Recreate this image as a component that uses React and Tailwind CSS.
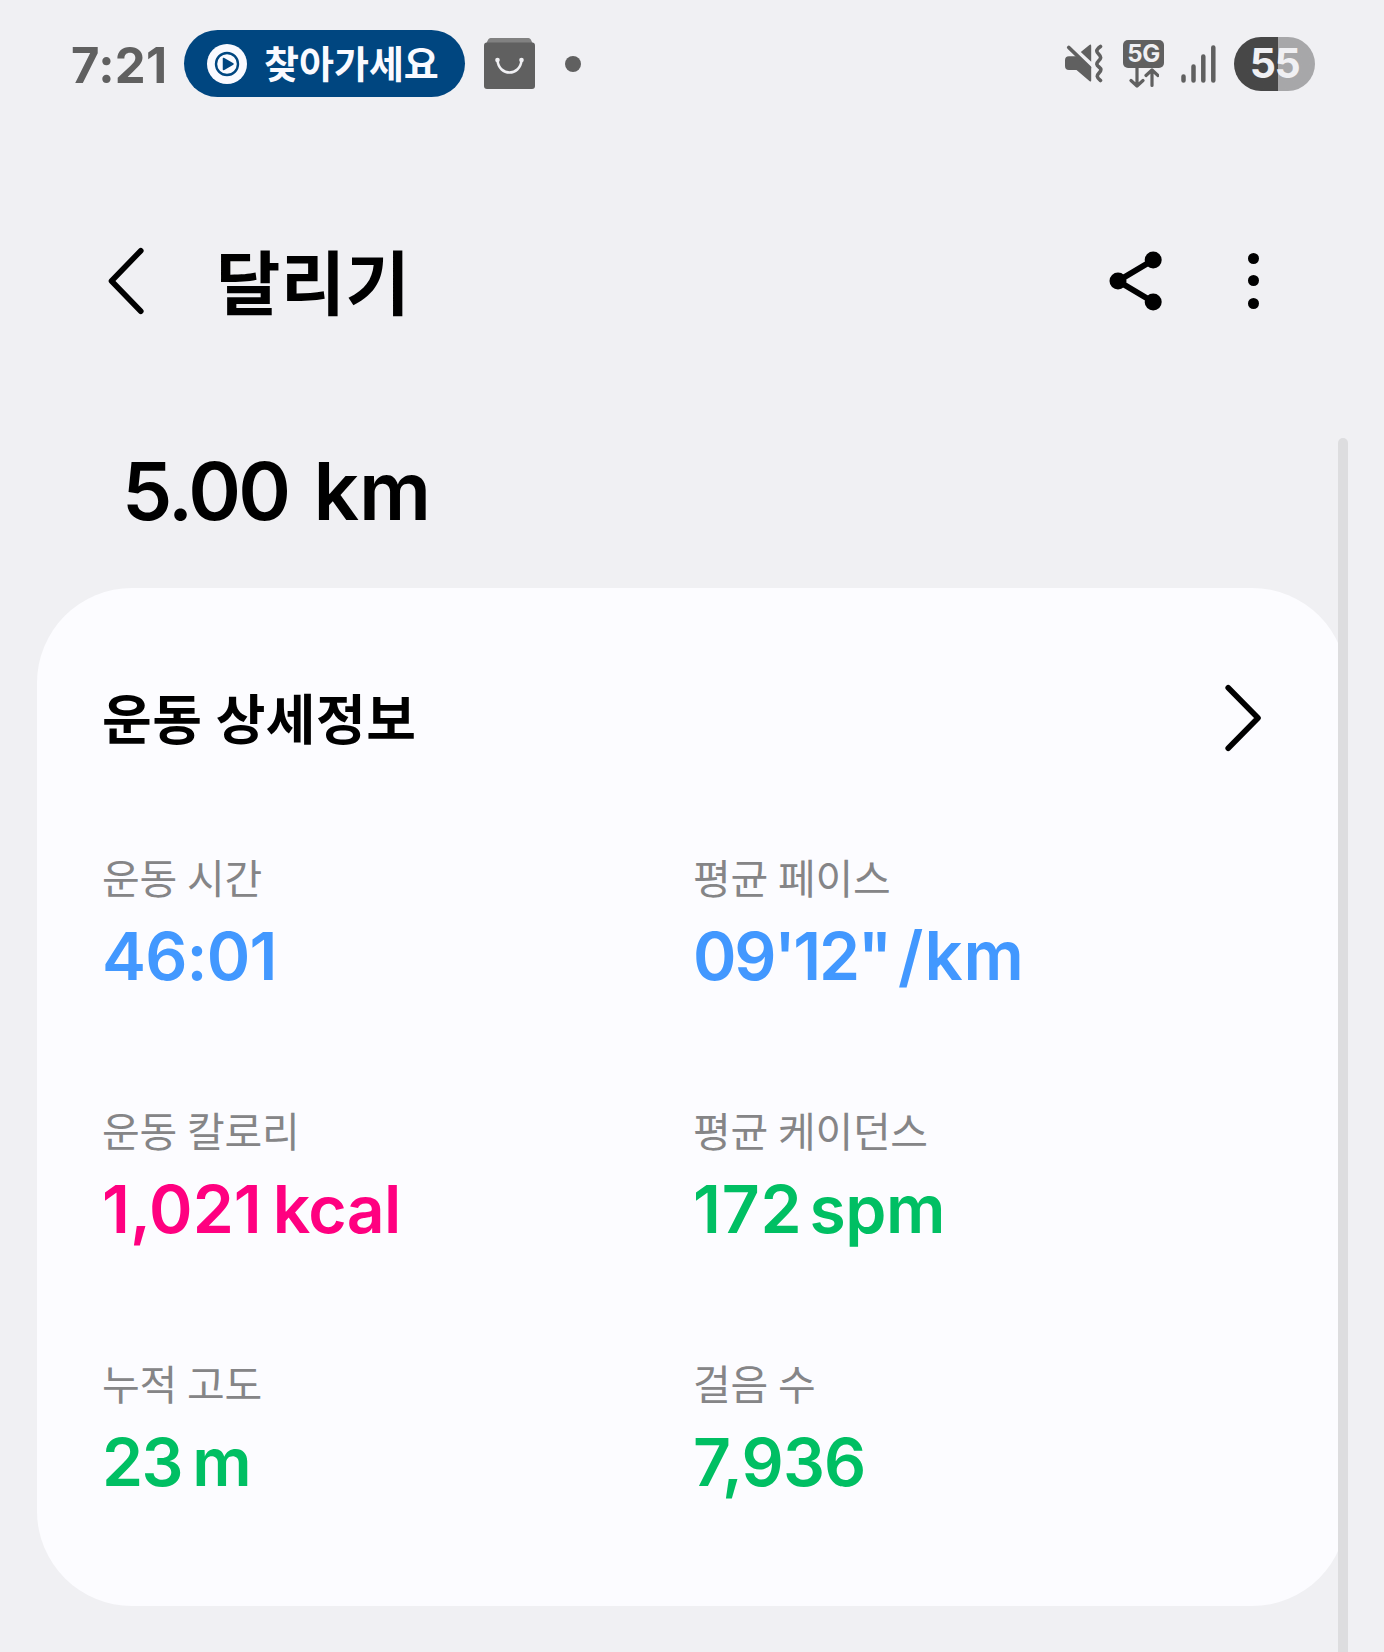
import React from "react";

const stats = [
  { label: "운동 시간", value: "46:01", unit: "", color: "text-[#4298ff]", tracking: "tracking-[-0.8px]", unitClass: "" },
  { label: "평균 페이스", value: "09'12\"", unit: "/km", color: "text-[#4298ff]", tracking: "tracking-[-2.3px]", unitClass: "ml-[8px] text-[67px] tracking-[1px]" },
  { label: "운동 칼로리", value: "1,021", unit: "kcal", color: "text-[#ff0080]", tracking: "tracking-[0px]", unitClass: "ml-[11px] tracking-[-0.6px]" },
  { label: "평균 케이던스", value: "172", unit: "spm", color: "text-[#00bf63]", tracking: "tracking-[0.8px]", unitClass: "ml-[7px] tracking-[-0.5px]" },
  { label: "누적 고도", value: "23", unit: "m", color: "text-[#00bf63]", tracking: "tracking-[-1.5px]", unitClass: "ml-[10px]" },
  { label: "걸음 수", value: "7,936", unit: "", color: "text-[#00bf63]", tracking: "tracking-[-0.8px]", unitClass: "" },
];

const PlayBadge = () => (
  <svg width="40" height="40" viewBox="0 0 40 40">
    <circle cx="20" cy="20" r="20" fill="#fafaff" />
    <circle cx="20" cy="20" r="11" fill="none" stroke="#004680" strokeWidth="2.4" />
    <path d="M16.5 14.5v11l9.5-5.5z" fill="#004680" stroke="#004680" strokeWidth="1.5" strokeLinejoin="round" />
  </svg>
);

const BagIcon = () => (
  <svg width="51" height="51" viewBox="0 0 51 51">
    <path d="M6.5 0h38q1.6 0 2.3 1.5L49 6H2l2.2-4.5Q4.9 0 6.5 0z" fill="#818181" />
    <rect x="0" y="4.5" width="51" height="46.5" rx="3" fill="#606060" />
    <path d="M13.5 22.5C15 38.5 36 38.5 37.5 22.5" fill="none" stroke="#f0f0f3" strokeWidth="2.6" />
    <circle cx="13.5" cy="22" r="2.3" fill="#f0f0f3" />
    <circle cx="37.5" cy="22" r="2.3" fill="#f0f0f3" />
  </svg>
);

const MuteIcon = () => (
  <svg width="39" height="39" viewBox="0 0 39 39" fill="#606060">
    <path d="M26.2 2v15.8L15.8 8 24.4.9q1.8-1 1.8 1.1z" />
    <path d="M4 12.3h8.5L26.2 24v12.5q0 1.6-1.5.8L11.500 26H4q-4 0-4-4v-5.700q0-4 4-4z" />
    <path d="M3.8 3.5 24.5 23.500" stroke="#606060" strokeWidth="3.8" strokeLinecap="round" />
    <path
      d="M35.5 2.500C30 6.500 31.500 8 34 10.500s2 4-.5 6.500-2 4 .5 6 2.500 3.500 0 6-2.500 4.500 1.500 7.500"
      fill="none"
      stroke="#606060"
      strokeWidth="3.6"
      strokeLinecap="round"
    />
  </svg>
);

const DataArrows = () => (
  <svg width="30" height="20" viewBox="0 0 30 20" fill="none" stroke="#606060" strokeWidth="3.2" strokeLinecap="round" strokeLinejoin="round">
    <path d="M8 0v17.5M2 12.5l6 5.5 6-5.5" />
    <path d="M23 17.5V2M17 7.5 23 2l6 5.5" />
  </svg>
);

const SignalIcon = () => (
  <svg width="35" height="38" viewBox="0 0 35 38" stroke="#606060" strokeWidth="4.5" strokeLinecap="round">
    <path d="M2.5 31.5v4M12.5 21.5v14M22.3 11.5v24M32.3 2.5v33" />
  </svg>
);

const StatusBar = () => (
  <div className="flex items-center h-[127px] pl-[71px] pr-[69px]">
    <span className="w-[113px] pt-[3px] text-[49px] leading-none font-bold tracking-[0.3px] text-[#606060]">7:21</span>
    <div className="flex items-center w-[281px] h-[67px] rounded-full bg-[#004680] pl-[23px]">
      <PlayBadge />
      <span className="ml-[17px] text-[38px] leading-none font-bold text-[#fafaff] whitespace-nowrap">찾아가세요</span>
    </div>
    <div className="ml-[19px]">
      <BagIcon />
    </div>
    <div className="ml-[30px] size-4 rounded-full bg-[#606060]" />

    <div className="ml-auto flex items-center">
      <MuteIcon />
      <div className="ml-[19px] flex flex-col items-center w-[41px]">
        <div className="flex items-center justify-center w-[41px] h-[28px] rounded-[5px] bg-[#606060] text-[24px] leading-none font-bold tracking-[-0.5px] text-[#f0f0f3]">
          5G
        </div>
        <DataArrows />
      </div>
      <div className="ml-[17px]">
        <SignalIcon />
      </div>
      <div className="ml-[18px] flex items-center justify-center w-[81px] h-[54px] rounded-full bg-linear-to-r from-[#474747] from-54% to-[#a7a7a9] to-54% text-[41px] leading-none font-bold tracking-[-1.5px] text-[#f0f0f3]">
        55
      </div>
    </div>
  </div>
);

const Header = () => (
  <header className="flex items-center h-[307px] pl-[107px] pr-[125px]">
    <svg width="38" height="68" viewBox="0 0 38 68" fill="none" stroke="#000" strokeWidth="5.6" strokeLinecap="round" strokeLinejoin="round">
      <path d="M33.8 3.7 4.5 34l29.3 30.3" />
    </svg>
    <h1 className="ml-[71px] pt-[8px] text-[70px] leading-none font-bold tracking-[0.4px]">달리기</h1>
    <svg className="ml-auto" width="54" height="60" viewBox="0 0 54 60">
      <path d="M44.2 9 9 30l35.2 21" fill="none" stroke="#000" strokeWidth="6" />
      <circle cx="9" cy="30" r="8.5" />
      <circle cx="44.2" cy="9" r="8.5" />
      <circle cx="44.2" cy="51" r="8.5" />
    </svg>
    <div className="ml-[85px] flex flex-col gap-[11.5px]">
      <span className="size-[11px] rounded-full bg-black" />
      <span className="size-[11px] rounded-full bg-black" />
      <span className="size-[11px] rounded-full bg-black" />
    </div>
  </header>
);

const App = () => {
  return (
    <div className="relative w-[1384px] h-[1652px] overflow-hidden bg-[#f0f0f3] font-['Inter','Noto_Sans_CJK_KR',sans-serif] text-black">
      <StatusBar />
      <Header />

      <div className="flex h-[154px] pl-[122px] pt-[17px] text-[80px] leading-none font-semibold">
        <span className="tracking-[-2.7px]">5.00</span>
        <span className="ml-[25px]">km</span>
      </div>

      <section className="ml-[37px] w-[1310px] h-[1018px] rounded-[95px] bg-[#fcfcff] pl-[65px]">
        <div className="flex items-center justify-between h-[259px] pr-[85px]">
          <h2 className="pt-[6px] text-[54px] leading-none font-bold tracking-[0.5px]">운동 상세정보</h2>
          <svg width="38" height="68" viewBox="0 0 38 68" fill="none" stroke="#000" strokeWidth="5.6" strokeLinecap="round" strokeLinejoin="round">
            <path d="M4.2 3.7 34 34 4.2 64.3" />
          </svg>
        </div>

        <div className="grid grid-cols-[591px_1fr] auto-rows-[253px]">
          {stats.map((s) => (
            <div key={s.label} className="pt-[10px]">
              <p className="text-[41px] leading-[44px] tracking-[-0.3px] [word-spacing:-1px] text-[#858587]">{s.label}</p>
              <p className={`mt-[20px] text-[66px] leading-[70px] font-semibold whitespace-nowrap ${s.color}`}>
                <span className={s.tracking}>{s.value}</span>
                {s.unit && <span className={s.unitClass}>{s.unit}</span>}
              </p>
            </div>
          ))}
        </div>
      </section>

      {/* Scrollbar */}
      <div className="absolute left-[1338px] top-[438px] w-[10px] h-[1300px] rounded-full bg-[#dddddf]" />
    </div>
  );
};

export default App;
